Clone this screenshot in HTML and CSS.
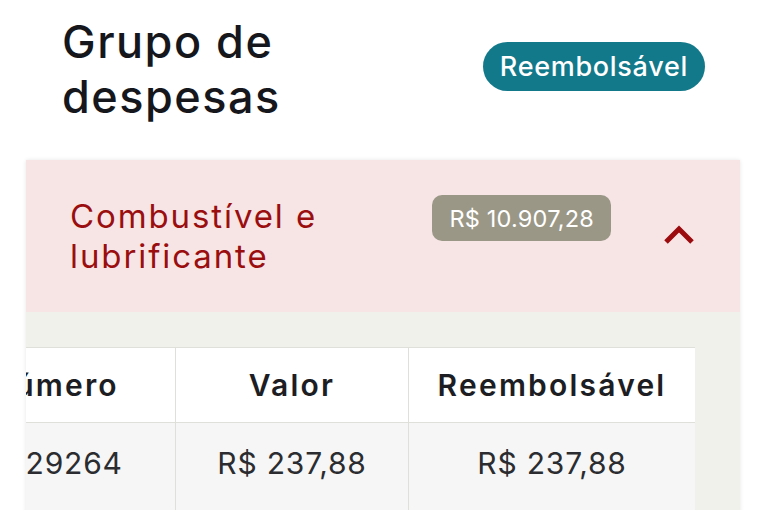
FILE: index.html
```html
<!DOCTYPE html>
<html lang="pt-BR">
<head>
<meta charset="utf-8">
<title>Grupo de despesas</title>
<link rel="stylesheet" href="styles.css">
</head>
<body>
<div class="page">
  <header class="top">
    <h1 class="title">Grupo de<br>despesas</h1>
    <span class="badge">Reembolsável</span>
  </header>
  <section class="card">
    <div class="card-head">
      <div class="cat-name">Combustível e lubrificante</div>
      <span class="amount">R$ 10.907,28</span>
      <svg class="chevron" viewBox="0 0 32 21" width="32" height="21" aria-hidden="true">
        <polyline points="3,18 16,5 29,18" fill="none" stroke="#9c0c0e" stroke-width="5"/>
      </svg>
    </div>
    <div class="card-body">
      <div class="table-scroll" id="tscroll">
        <table class="grid">
          <colgroup>
            <col class="c1"><col class="c2"><col class="c3">
          </colgroup>
          <thead>
            <tr><th>Número</th><th>Valor</th><th>Reembolsável</th></tr>
          </thead>
          <tbody>
            <tr><td>0029264</td><td>R$ 237,88</td><td>R$ 237,88</td></tr>
          </tbody>
        </table>
      </div>
    </div>
  </section>
</div>
<script src="script.js"></script>
</body>
</html>
```

FILE: styles.css
```css
* { box-sizing: border-box; }
html, body { margin: 0; padding: 0; background: #ffffff; }
body {
  font-family: Inter, "Noto Sans", "Liberation Sans", sans-serif;
  color: #16181d;
  overflow: hidden;
}
.page { width: 765px; }

.top {
  display: flex;
  justify-content: space-between;
  align-items: center;
  padding: 14px 60px 36px 62px;
}
.title {
  margin: 0;
  font-size: 45px;
  line-height: 55px;
  font-weight: 500;
  letter-spacing: 1.5px;
  color: #15171c;
}
.badge {
  display: inline-flex;
  align-items: center;
  justify-content: center;
  height: 49px;
  padding: 0 17px;
  margin-bottom: 5px;
  border-radius: 25px;
  background: #12798a;
  color: #ffffff;
  font-size: 27px;
  font-weight: 500;
  letter-spacing: 0.7px;
}

.card {
  margin: 0 25px 0 26px;
  box-shadow: 0 0 4px rgba(0, 0, 0, 0.10);
}
.card-head {
  display: flex;
  align-items: flex-start;
  height: 152px;
  padding: 35px 45px 0 44px;
  background: #f7e5e6;
}
.cat-name {
  flex: 1;
  font-size: 33px;
  line-height: 40px;
  letter-spacing: 1.9px;
  color: #9a0e10;
  padding-top: 1px;
}
.amount {
  display: inline-flex;
  align-items: center;
  height: 46px;
  padding: 0 17px;
  border-radius: 10px;
  background: #9b9787;
  color: #ffffff;
  font-size: 23.5px;
  letter-spacing: 0.2px;
}
.chevron {
  margin-left: 52px;
  margin-top: 29px;
}

.card-body {
  background: #f1f1ec;
  padding: 35px 45px 40px 0;
}
.table-scroll {
  overflow-x: hidden;
}
.grid {
  border-collapse: collapse;
  table-layout: fixed;
  width: 766px;
}
.c1 { width: 246px; }
.c2 { width: 233px; }
.c3 { width: 287px; }
.grid th, .grid td {
  border: 1px solid #e0e0da;
  text-align: center;
  white-space: nowrap;
}
.grid th:first-child, .grid td:first-child {
  padding-left: 5px;
}
.grid th {
  height: 75px;
  background: #ffffff;
  font-size: 30px;
  font-weight: 600;
  letter-spacing: 2.2px;
  color: #1c1e24;
}
.grid td {
  height: 100px;
  vertical-align: top;
  padding-top: 22px;
  background: #f5f6f5;
  font-size: 30px;
  letter-spacing: 0.8px;
  color: #2b2c30;
}
```

FILE: script.js
```js
document.getElementById('tscroll').scrollLeft = 97;
```
